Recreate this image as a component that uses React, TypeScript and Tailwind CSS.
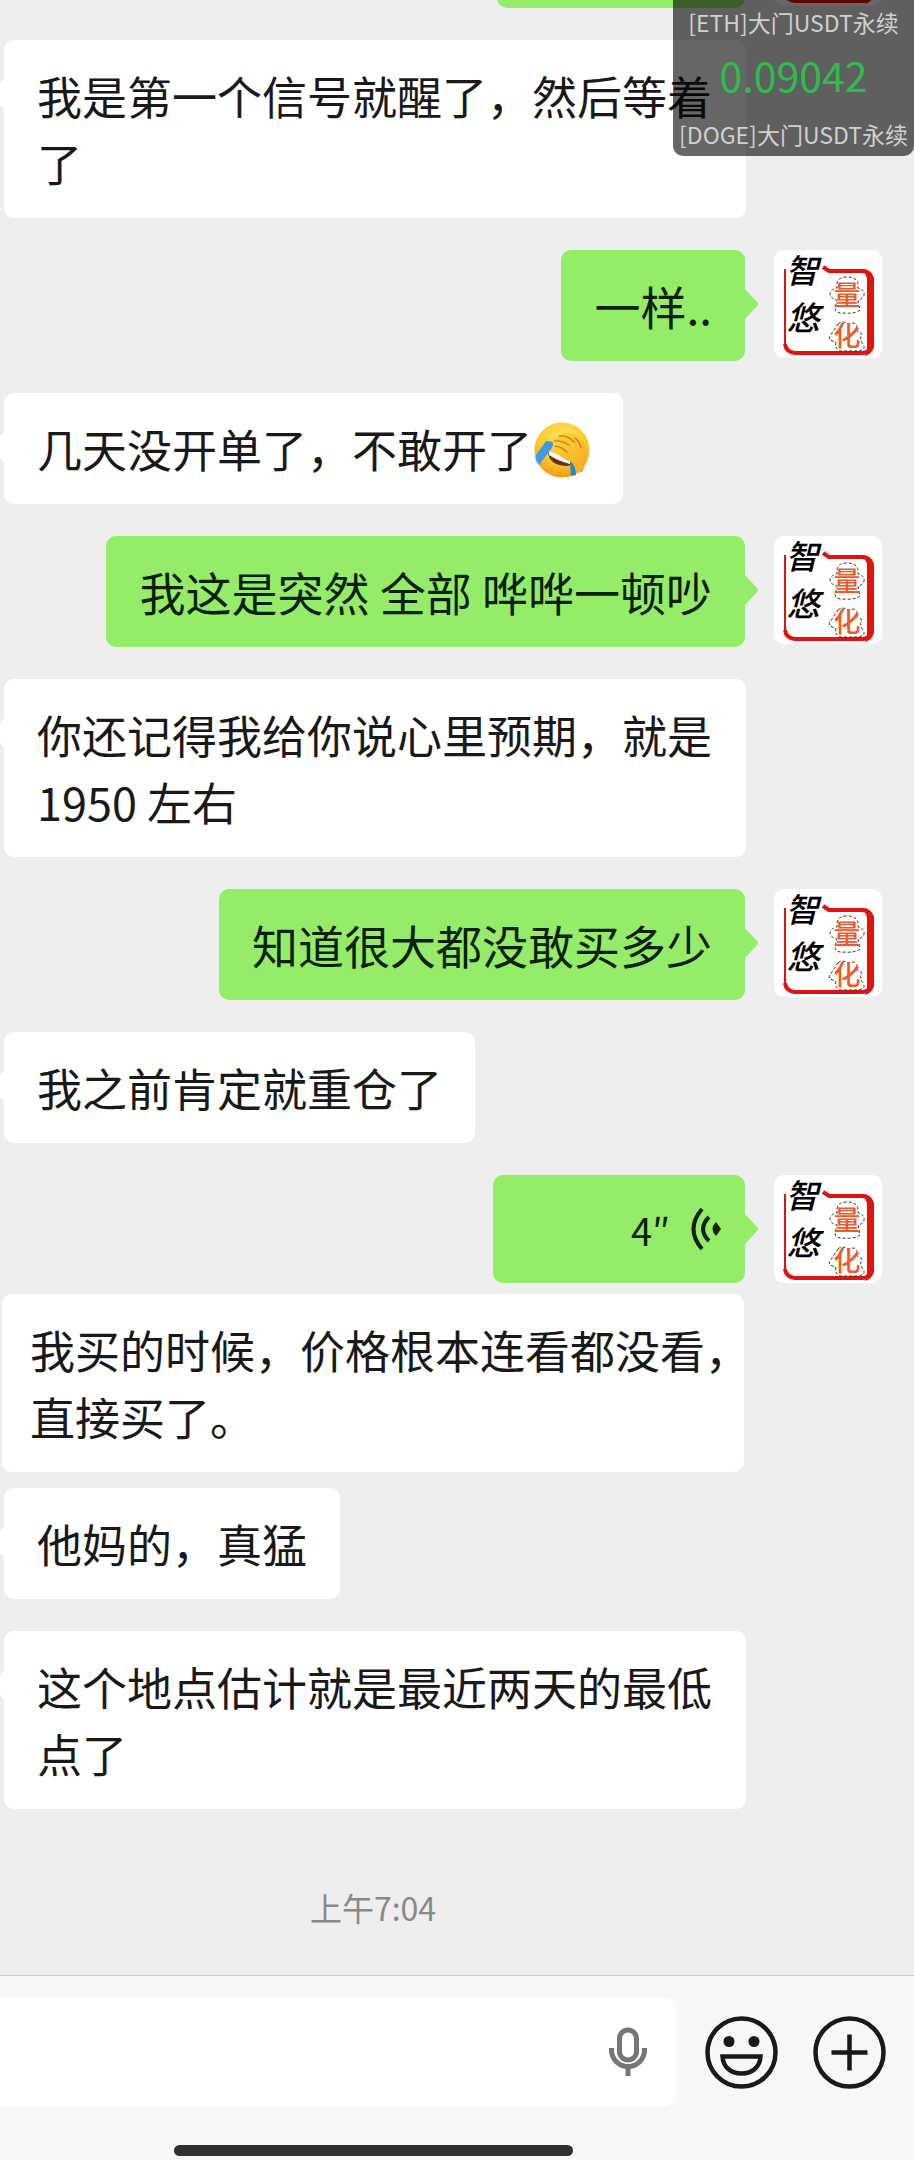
import { useState } from "react";
import type { ReactNode } from "react";
import clsx from "clsx";

type Message = {
  id: number;
  from: "me" | "friend";
  text?: string;
  emoji?: boolean;
  seconds?: number;
  plain?: boolean;
  spacing?: string;
};

const messages: Message[] = [
  { id: 1, from: "friend", text: "我是第一个信号就醒了，然后等着了" },
  { id: 2, from: "me", text: "一样.." },
  { id: 3, from: "friend", text: "几天没开单了，不敢开了", emoji: true },
  { id: 4, from: "me", text: "我这是突然 全部 哗哗一顿吵" },
  { id: 5, from: "friend", text: "你还记得我给你说心里预期，就是 1950 左右" },
  { id: 6, from: "me", text: "知道很大都没敢买多少" },
  { id: 7, from: "friend", text: "我之前肯定就重仓了" },
  { id: 8, from: "me", seconds: 4 },
  { id: 9, from: "friend", text: "我买的时候，价格根本连看都没看，\n直接买了。", plain: true, spacing: "mt-[11px]" },
  { id: 10, from: "friend", text: "他妈的，真猛", spacing: "mt-4" },
  { id: 11, from: "friend", text: "这个地点估计就是最近两天的最低点了" },
];

function Avatar({ frameOnly }: { frameOnly?: boolean }) {
  return (
    <svg viewBox="0 0 108 108" className="size-[108px] shrink-0 rounded-[10px] bg-white" role="img" aria-label="智悠量化">
      <path d="M49 17 L55 21 H88 Q96 21 97 29 V95 Q96 103 88 103 H21 Q12 102 11 94" fill="none" stroke="#e3120f" strokeWidth="4" />
      <path d="M89 19 Q98 20 100 28 V97 Q98 104 91 106 L93 99 V28Z" fill="#e3120f" />
      <path d="M11 19 V95" stroke="#e3120f" strokeWidth="2" />
      {!frameOnly && (
        <g fontFamily="'Noto Sans CJK SC', sans-serif" textAnchor="middle">
          <path
            d="M63 34 Q64 27 73 27 Q83 27 84 34 L84 38 Q91 40 90 45 Q89 49 84 50 L86 60 Q80 64 72 63 Q62 64 61 59 L63 50 Q56 48 56 44 Q57 39 63 38Z M64 74 Q68 70 73 74 L80 73 Q85 76 82 80 L88 84 Q85 89 89 94 Q93 100 83 101 L66 101 Q60 98 62 92 Q53 90 56 86 Q60 80 64 74Z"
            fill="#fff"
            stroke="#333"
            strokeWidth="1"
            strokeDasharray="3 2"
          />
          <g fontSize="33" fontWeight="500" fontStyle="italic" fill="#000">
            <text x="28" y="33">智</text>
            <text x="29" y="80">悠</text>
          </g>
          <g fontSize="27" fontWeight="500" fill="#f05a28">
            <text x="73" y="55">量</text>
            <text x="73" y="96">化</text>
          </g>
        </g>
      )}
    </svg>
  );
}

function FacepalmEmoji() {
  return (
    <svg viewBox="0 0 56 56" className="ml-0.5 inline-block size-14 align-[-10px]" role="img" aria-label="捂脸">
      <defs>
        <radialGradient id="face" cx="50%" cy="30%" r="70%">
          <stop offset="0" stopColor="#ffe566" />
          <stop offset="0.6" stopColor="#fdc92f" />
          <stop offset="1" stopColor="#f09a1a" />
        </radialGradient>
        <linearGradient id="hand" x1="0" y1="0" x2="1" y2="1">
          <stop offset="0" stopColor="#ffd83f" />
          <stop offset="1" stopColor="#f5a623" />
        </linearGradient>
      </defs>
      <circle cx="28" cy="28" r="27.5" fill="url(#face)" />
      <path d="M14 30 Q24 34 37 40 Q38 44 32 44 Q15 43 14 30Z" fill="#6b3108" />
      <path d="M15 29 L36 38 L36 42 Q24 39 15 33Z" fill="#fff" />
      <path d="M12 19 L20 20 L18 26 L5 43 Q0 37 2 33Z" fill="#3f9be6" />
      <path d="M36 40 L41 42 L42 53 L37 54Z" fill="#2a83cf" />
      <path
        d="M19 19 C21 16 25 12 31 11 C38 10 44 14 49 20 C54 26 54 32 53 37 C50 42 51 45 49 49 C45 53 41 49 41 46 L38 40 C30 38 25 33 19 28 C17 25 22 24 23 25 C19 23 18 21 19 19Z"
        fill="url(#hand)"
      />
      <path
        d="M20 19 Q27 18 35 23 M21 24 Q28 25 33 30 M25 14 Q34 13 40 20 M41 16 Q46 20 47 26"
        fill="none"
        stroke="#c9780f"
        strokeWidth="1.2"
        strokeLinecap="round"
      />
    </svg>
  );
}

function VoiceIcon() {
  return (
    <svg viewBox="0 0 30 42" className="h-[42px] w-[30px]" fill="none" stroke="#10200a" strokeWidth="4" aria-hidden="true">
      <path d="M11 1 Q-6 21 11 41" />
      <path d="M18 9 Q6 21 18 33" />
      <path d="M25 14 L30 21 L25 28 Q18 21 25 14Z" fill="#10200a" stroke="none" />
    </svg>
  );
}

type BubbleProps = {
  mine?: boolean;
  tail?: boolean;
  className?: string;
  children?: ReactNode;
};

function Bubble({ mine, tail = true, className, children }: BubbleProps) {
  return (
    <div
      className={clsx(
        "relative rounded-[10px] py-[22px] leading-[67px]",
        mine ? "bg-[#95ec69] text-[46px] text-[#0a1f05]" : "bg-white text-[45px] text-[#191919]",
        className
      )}
    >
      {tail && (
        <svg
          viewBox="0 0 14 32"
          className={clsx("absolute top-[38px] h-8 w-3.5", mine ? "left-full -ml-px" : "right-full -mr-px rotate-180")}
          fill={mine ? "#95ec69" : "#fff"}
          aria-hidden="true"
        >
          <path d="M0 0 L13 14 Q15 16 13 18 L0 32Z" />
        </svg>
      )}
      {children}
    </div>
  );
}

function MessageRow({ message }: { message: Message }) {
  const spacing = message.spacing ?? "mt-8";

  if (message.from === "me") {
    return (
      <li className={clsx("flex items-start justify-end gap-[29px] pr-8 pl-16", spacing)}>
        {message.seconds ? (
          <button type="button" aria-label="播放语音">
            <Bubble mine className="flex h-[108px] w-[252px] items-center justify-end gap-[21px] pr-6">
              <span className="text-[38px]">{message.seconds}″</span>
              <VoiceIcon />
            </Bubble>
          </button>
        ) : (
          <Bubble mine className="px-[33px]">{message.text}</Bubble>
        )}
        <Avatar />
      </li>
    );
  }

  return (
    <li className={clsx("flex items-start", message.plain ? "pr-[170px] pl-0.5" : "pr-[168px] pl-1", spacing)}>
      <Bubble tail={!message.plain} className={message.plain ? "min-w-0 pl-7 whitespace-pre" : "px-[33px]"}>
        {message.text}
        {message.emoji && <FacepalmEmoji />}
      </Bubble>
    </li>
  );
}

function PriceTicker() {
  return (
    <aside className="absolute top-0 right-0 flex h-[156px] w-[241px] flex-col items-center justify-between rounded-b-[10px] bg-black/60 py-1.5 text-[23px] leading-8 whitespace-nowrap text-[#d0d0d0]">
      <span>[ETH]大门USDT永续</span>
      <span className="pb-2 text-[41px] leading-10 text-[#2dbd4e]">0.09042</span>
      <span>[DOGE]大门USDT永续</span>
    </aside>
  );
}

function InputBar() {
  const [draft, setDraft] = useState("");

  return (
    <footer className="border-t border-[#cfcfcf] bg-[#f7f7f7] pt-[22px] pb-1">
      <div className="flex items-center pr-7">
        <div className="flex h-[108px] flex-1 items-center rounded-r-[10px] bg-white pr-[29px]">
          <input
            value={draft}
            onChange={(e) => setDraft(e.target.value)}
            aria-label="输入消息"
            className="h-full min-w-0 flex-1 bg-transparent px-8 text-[45px] outline-none"
          />
          <button type="button" aria-label="语音输入">
            <svg viewBox="0 0 38 50" className="h-[50px] w-[38px]" fill="none" stroke="#767676" strokeWidth="5">
              <rect x="10.5" y="3" width="17" height="30" rx="8.5" />
              <path d="M2.5 21 V23 A16.5 16.5 0 0 0 35.5 23 V21" />
              <path d="M19 40 V49" />
            </svg>
          </button>
        </div>
        <button type="button" aria-label="表情" className="ml-[29px]">
          <svg viewBox="0 0 73 73" className="size-[73px]" fill="none" stroke="#191919" strokeWidth="4.5">
            <circle cx="36.5" cy="36.5" r="34" />
            <circle cx="24" cy="25.5" r="5.5" fill="#191919" stroke="none" />
            <circle cx="49" cy="25.5" r="5.5" fill="#191919" stroke="none" />
            <path d="M17.5 40.5 H55.5 C55 51 47 57.500 36.5 57.5 C26 57.5 18 51 17.5 40.5Z" />
          </svg>
        </button>
        <button type="button" aria-label="更多" className="ml-[35px]">
          <svg viewBox="0 0 73 73" className="size-[73px]" fill="none" stroke="#191919" strokeWidth="4.5">
            <circle cx="36.5" cy="36.5" r="34" />
            <path d="M18.5 36.5 H54.5 M36.5 18.5 V54.5" />
          </svg>
        </button>
      </div>
      <div className="mt-[39px] mr-[341px] ml-[174px] h-[11px] rounded-full bg-[#303030]" />
    </footer>
  );
}

export default function App() {
  return (
    <div className="relative flex min-h-screen flex-col overflow-hidden bg-[#eee] font-['Noto_Sans_CJK_SC',sans-serif]">
      <main className="flex-1">
        {/* end of the message scrolled off the top */}
        <div className="flex h-2 items-end justify-end gap-[29px] overflow-hidden pr-8">
          <Bubble mine tail={false} className="h-[111px] w-[248px]" />
          <div className="pb-0.5">
            <Avatar frameOnly />
          </div>
        </div>
        <ol>
          {messages.map((message) => (
            <MessageRow key={message.id} message={message} />
          ))}
        </ol>
        <p className="mt-[76px] mr-[168px] pb-10 text-center text-[32px] leading-[44px] text-[#888]">上午7:04</p>
      </main>
      <InputBar />
      <PriceTicker />
    </div>
  );
}
